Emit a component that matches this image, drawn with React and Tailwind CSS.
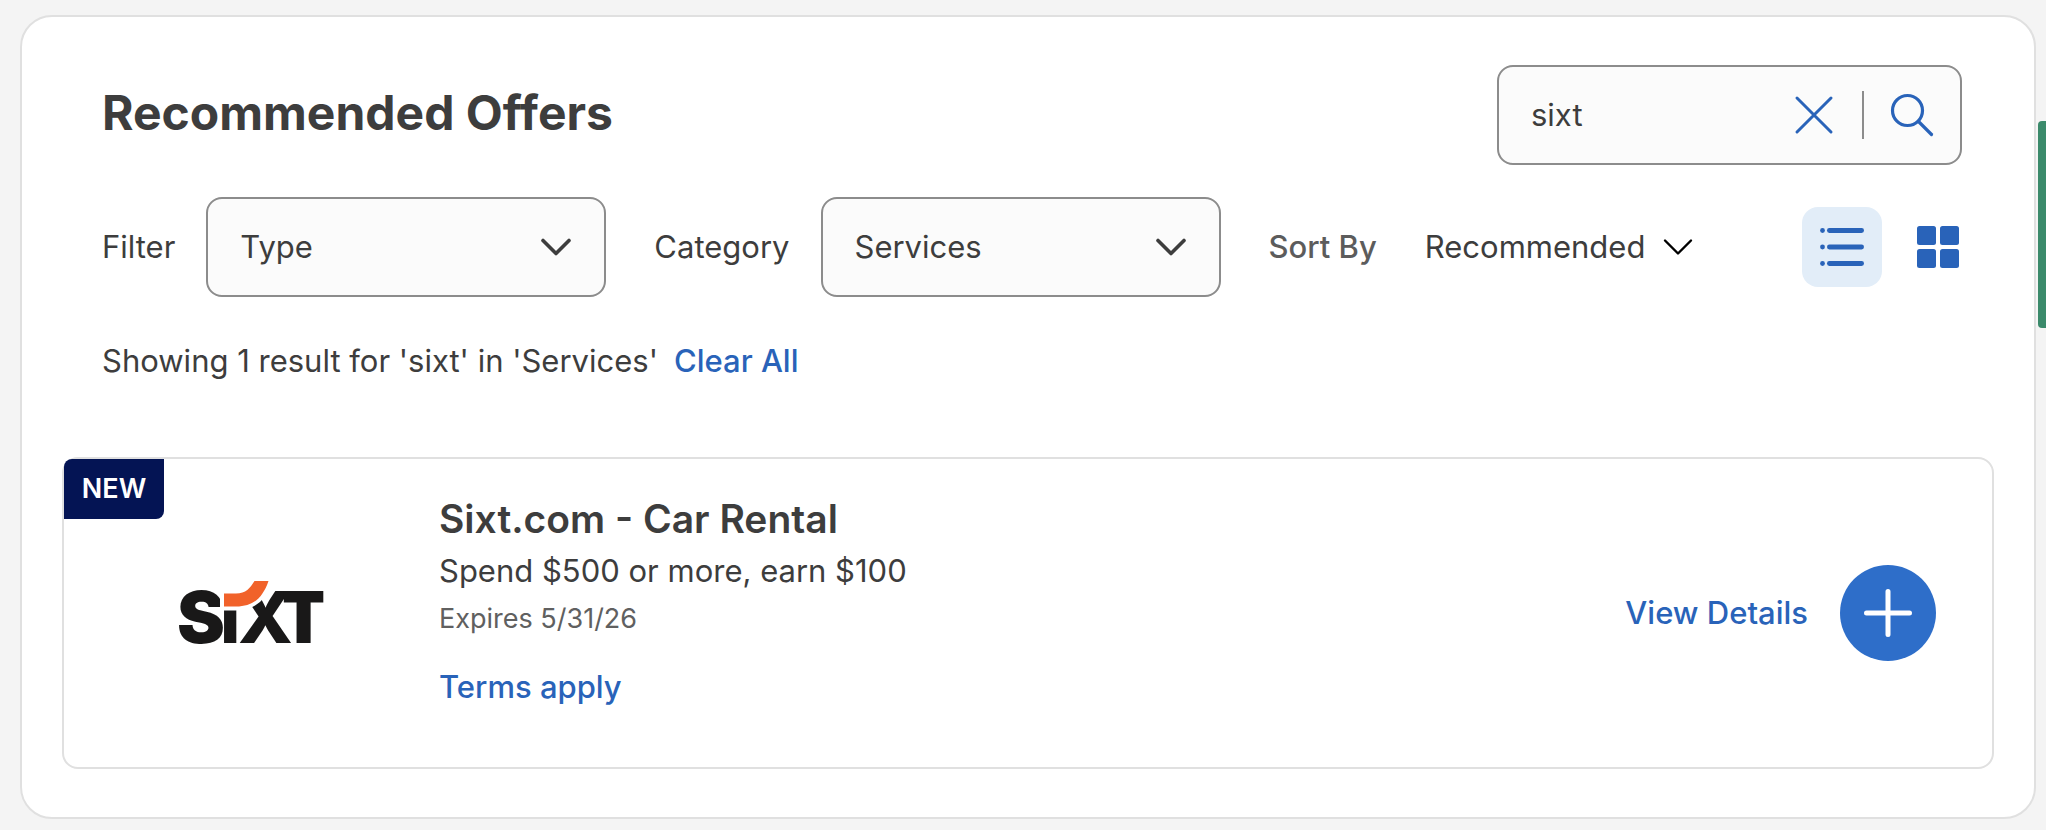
import React, { useState } from "react";

const Chevron = ({ className, strokeWidth }) => (
  <svg className={className} viewBox="0 0 32 20" fill="none" stroke="currentColor" strokeWidth={strokeWidth} strokeLinecap="round" strokeLinejoin="round" aria-hidden="true">
    <path d="M3 3.5 16 16.5 29 3.5" />
  </svg>
);

const CloseIcon = () => (
  <svg className="size-10" viewBox="0 0 40 40" fill="none" stroke="currentColor" strokeWidth="3" strokeLinecap="round" aria-hidden="true">
    <path d="M3 3 37 37M37 3 3 37" />
  </svg>
);

const SearchIcon = () => (
  <svg className="size-11" viewBox="0 0 44 44" fill="none" stroke="currentColor" strokeWidth="3.2" strokeLinecap="round" aria-hidden="true">
    <circle cx="17.5" cy="17.5" r="15" />
    <path d="M28.5 28.5 41.5 41.5" />
  </svg>
);

const ListIcon = () => (
  <svg className="h-10 w-11" viewBox="0 0 44 40" fill="currentColor" aria-hidden="true">
    {[3.5, 20, 36.5].map((y) => (
      <g key={y}>
        <circle cx="2.5" cy={y} r="2.4" />
        <rect x="7" y={y - 2.4} width="37" height="4.8" rx="2.4" />
      </g>
    ))}
  </svg>
);

const GridIcon = () => (
  <svg className="size-[42px]" viewBox="0 0 42 42" fill="currentColor" aria-hidden="true">
    <rect width="19" height="19" rx="2.5" />
    <rect x="23" width="19" height="19" rx="2.5" />
    <rect y="23" width="19" height="19" rx="2.5" />
    <rect x="23" y="23" width="19" height="19" rx="2.5" />
  </svg>
);

const SixtLogo = () => (
  <svg className="h-[108px] w-40" viewBox="-8 -22 160 108" role="img" aria-label="Sixt">
    <text y="62" fill="#191818" fontFamily="Inter" fontWeight="800" fontSize="72">
      <tspan x="-2" fontWeight="900">S</tspan>
      <tspan x="41">ı</tspan>
      <tspan x="59">X</tspan>
      <tspan x="103" fontFamily="Open Sans" fontSize="73">T</tspan>
    </text>
    <path d="M45 12.500H57C67 12.500 71 7 75.500 0H89.500C84 16 75 25.500 57 25.500H45Z" fill="#f1622a" stroke="#fff" strokeWidth="8" paintOrder="stroke" />
  </svg>
);

const SelectBox = ({ id, value, onChange, options }) => (
  <div className="relative w-[400px]">
    <select
      id={id}
      value={value}
      onChange={(e) => onChange(e.target.value)}
      className="h-[100px] w-full appearance-none rounded-2xl border-2 border-[#8c8c8c] bg-[#fbfbfb] pl-8 pr-20"
    >
      {options.map((option) => (
        <option key={option}>{option}</option>
      ))}
    </select>
    <Chevron className="pointer-events-none absolute right-[34px] top-10 h-5 w-8" strokeWidth="3.6" />
  </div>
);

const App = () => {
  const [query, setQuery] = useState("sixt");
  const [type, setType] = useState("Type");
  const [category, setCategory] = useState("Services");
  const [sort, setSort] = useState("Recommended");
  const [view, setView] = useState("list");

  return (
    <div className="relative min-h-screen bg-[#f4f4f4] pb-[11px] pl-5 pr-[10px] pt-[15px] font-['Inter',sans-serif] text-[31px] leading-[48px] text-[#3d3d3d]">
      <main className="rounded-[32px] border-2 border-[#e0e0e0] bg-white px-10 py-12">
        <div className="pl-10 pr-8">
          <div className="flex items-center justify-between">
            <h1 className="pb-1 text-[48px] font-bold leading-[60px]">Recommended Offers</h1>
            <div className="flex h-[100px] w-[465px] items-center rounded-2xl border-2 border-[#8c8c8c] bg-[#fbfbfb] pl-8 pr-[26px]">
              <input
                type="text"
                aria-label="Search offers"
                value={query}
                onChange={(e) => setQuery(e.target.value)}
                className="min-w-0 flex-1 bg-transparent outline-none"
              />
              <button type="button" aria-label="Clear search" onClick={() => setQuery("")} className="text-[#2963b9]">
                <CloseIcon />
              </button>
              <span className="ml-7 mr-[26px] h-12 w-[2px] bg-[#8c8c8c]" />
              <button type="button" aria-label="Search" className="text-[#2963b9]">
                <SearchIcon />
              </button>
            </div>
          </div>

          <div className="mt-8 flex items-center">
            <label htmlFor="type" className="mr-[31px]">Filter</label>
            <SelectBox id="type" value={type} onChange={setType} options={["Type", "Spend", "Points"]} />
            <label htmlFor="category" className="ml-12 mr-[31px]">Category</label>
            <SelectBox id="category" value={category} onChange={setCategory} options={["Services", "Travel", "Dining"]} />
            <label htmlFor="sort" className="mx-12 font-medium text-[#5c5c5c]">Sort By</label>
            <div className="relative">
              <select
                id="sort"
                value={sort}
                onChange={(e) => setSort(e.target.value)}
                className="appearance-none bg-transparent pr-12"
              >
                <option>Recommended</option>
                <option>Newest</option>
              </select>
              <Chevron className="pointer-events-none absolute right-0 top-[14px] h-5 w-8 text-black" strokeWidth="2.4" />
            </div>
            <div className="ml-auto flex items-center gap-8 text-[#2963b9]">
              <button
                type="button"
                aria-label="List view"
                aria-pressed={view === "list"}
                onClick={() => setView("list")}
                className="flex size-20 items-center justify-center rounded-2xl bg-[#e2edf8]"
              >
                <ListIcon />
              </button>
              <button
                type="button"
                aria-label="Grid view"
                aria-pressed={view === "grid"}
                onClick={() => setView("grid")}
                className="flex h-20 w-12 items-center justify-center"
              >
                <GridIcon />
              </button>
            </div>
          </div>

          <div className="mt-10 flex gap-4">
            <p>Showing 1 result for 'sixt' in 'Services'</p>
            <button type="button" className="font-medium text-[#2963b9]">Clear All</button>
          </div>
        </div>

        <article className="relative mt-[72px] flex items-center rounded-2xl border-2 border-[#e0e0e0] pr-14">
          <span className="absolute left-0 top-0 flex h-[60px] w-[100px] items-center justify-center rounded-br-lg rounded-tl-lg bg-[#041454] text-[27px] font-semibold text-white">
            NEW
          </span>
          <div className="w-[375px] shrink-0 pl-[107px]">
            <SixtLogo />
          </div>
          <div className="flex-1 pb-14 pt-8">
            <h2 className="text-[39px] font-semibold leading-[56px]">Sixt.com - Car Rental</h2>
            <p>Spend $500 or more, earn $100</p>
            <p className="text-[27px] text-[#606060]">Expires 5/31/26</p>
            <a href="#terms" className="mt-5 block w-fit font-medium text-[#2963b9]">Terms apply</a>
          </div>
          <a href="#details" className="mr-8 font-medium text-[#2963b9]">View Details</a>
          <button type="button" aria-label="Add offer" className="flex size-24 items-center justify-center rounded-full bg-[#2e6ec9] text-white">
            <svg className="size-12" viewBox="0 0 48 48" stroke="currentColor" strokeWidth="5" strokeLinecap="round" aria-hidden="true">
              <path d="M24 2.500V45.500M2.500 24H45.500" />
            </svg>
          </button>
        </article>
      </main>
      <div className="absolute right-0 top-[121px] h-[207px] w-2 rounded-l-[4px] bg-[#3b8a6b]" />
    </div>
  );
};

export default App;
